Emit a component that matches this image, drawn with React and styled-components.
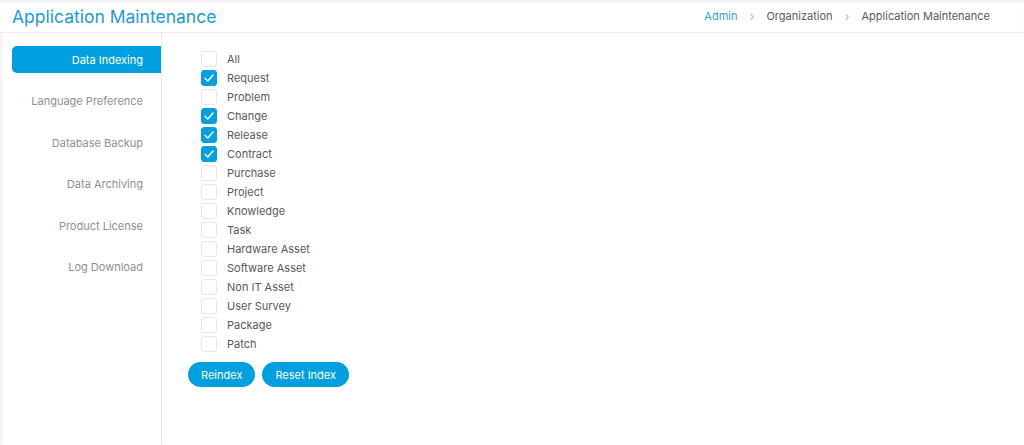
import React, { useState } from "react";
import styled, { createGlobalStyle } from "styled-components";

const GlobalStyle = createGlobalStyle`
  html, body {
    margin: 0;
    padding: 0;
    background: #ffffff;
    font-family: Inter, "Noto Sans", sans-serif;
  }
`;

const modules = [
  { name: "All", checked: false },
  { name: "Request", checked: true },
  { name: "Problem", checked: false },
  { name: "Change", checked: true },
  { name: "Release", checked: true },
  { name: "Contract", checked: true },
  { name: "Purchase", checked: false },
  { name: "Project", checked: false },
  { name: "Knowledge", checked: false },
  { name: "Task", checked: false },
  { name: "Hardware Asset", checked: false },
  { name: "Software Asset", checked: false },
  { name: "Non IT Asset", checked: false },
  { name: "User Survey", checked: false },
  { name: "Package", checked: false },
  { name: "Patch", checked: false },
];

const tabs = [
  "Data Indexing",
  "Language Preference",
  "Database Backup",
  "Data Archiving",
  "Product License",
  "Log Download",
];

const App = () => {
  const [active, setActive] = useState(0);
  const [items, setItems] = useState(modules);

  const toggle = (i) => {
    const next = [...items];
    next[i] = { ...next[i], checked: !next[i].checked };
    setItems(next);
  };

  return (
    <Page>
      <GlobalStyle />
      <Header>
        <Title>Application Maintenance</Title>
        <Crumbs>
          <Crumb $link>Admin</Crumb>
          <Sep>›</Sep>
          <Crumb>Organization</Crumb>
          <Sep>›</Sep>
          <Crumb>Application Maintenance</Crumb>
        </Crumbs>
      </Header>
      <Body>
        <Sidebar>
          {tabs.map((t, i) => (
            <Tab key={t} $active={i === active} onClick={() => setActive(i)}>
              {t}
            </Tab>
          ))}
        </Sidebar>
        <Content>
          <List>
            {items.map((m, i) => (
              <Row key={m.name} onClick={() => toggle(i)}>
                <Box $checked={m.checked}>
                  {m.checked && (
                    <svg width="10" height="8" viewBox="0 0 10 8">
                      <path
                        d="M1 4.2 L3.8 7 L9 1"
                        fill="none"
                        stroke="#fff"
                        strokeWidth="1.5"
                        strokeLinecap="round"
                        strokeLinejoin="round"
                      />
                    </svg>
                  )}
                </Box>
                <Label>{m.name}</Label>
              </Row>
            ))}
          </List>
          <Buttons>
            <Button>Reindex</Button>
            <Button>Reset Index</Button>
          </Buttons>
        </Content>
      </Body>
    </Page>
  );
};

const Page = styled.div`
  height: 445px;
  display: flex;
  flex-direction: column;
  box-shadow: inset 4px 0 4px -2px rgba(0, 0, 0, 0.06);
`;

const Header = styled.header`
  height: 32px;
  display: flex;
  align-items: center;
  justify-content: space-between;
  padding: 0 34px 0 12px;
  border-bottom: 1px solid #eaeef2;
  box-shadow: inset 0 4px 4px -2px rgba(0, 0, 0, 0.07);
  background: #fff;
`;

const Title = styled.h1`
  margin: 0;
  font-size: 17.5px;
  font-weight: 400;
  color: #1a9ad9;
`;

const Crumbs = styled.nav`
  display: flex;
  align-items: center;
  gap: 12px;
  font-size: 11px;
`;

const Crumb = styled.span`
  color: ${(p) => (p.$link ? "#2fa3dc" : "#555a60")};
`;

const Sep = styled.span`
  color: #b8bfc6;
  font-size: 13px;
`;

const Body = styled.div`
  flex: 1;
  display: flex;
`;

const Sidebar = styled.aside`
  width: 149px;
  margin-left: 12px;
  padding-top: 13px;
  border-right: 1px solid #e6e9ec;
  display: flex;
  flex-direction: column;
  gap: 14.6px;
`;

const Tab = styled.div`
  height: 27px;
  display: flex;
  align-items: center;
  justify-content: flex-end;
  padding-right: 18px;
  border-radius: 5px 0 0 5px;
  font-size: 11px;
  cursor: pointer;
  background: ${(p) => (p.$active ? "#009fe0" : "transparent")};
  color: ${(p) => (p.$active ? "#ffffff" : "#8a9098")};
`;

const Content = styled.main`
  padding: 18px 0 0 26px;
`;

const List = styled.div`
  display: flex;
  flex-direction: column;
  gap: 3px;
  padding-left: 13px;
`;

const Row = styled.label`
  display: flex;
  align-items: center;
  gap: 10px;
  height: 16px;
  cursor: pointer;
`;

const Box = styled.span`
  width: 16px;
  height: 16px;
  box-sizing: border-box;
  border-radius: 3px;
  display: flex;
  align-items: center;
  justify-content: center;
  border: 1px solid ${(p) => (p.$checked ? "#009fe0" : "#e3e7eb")};
  background: ${(p) => (p.$checked ? "#009fe0" : "#fff")};
`;

const Label = styled.span`
  font-size: 11px;
  color: #555a60;
`;

const Buttons = styled.div`
  display: flex;
  gap: 7px;
  margin-top: 10px;
`;

const Button = styled.button`
  height: 25px;
  padding: 0 13px;
  border: none;
  border-radius: 13px;
  background: #009fe0;
  color: #fff;
  font-family: inherit;
  font-size: 11px;
  cursor: pointer;
`;

export default App;
